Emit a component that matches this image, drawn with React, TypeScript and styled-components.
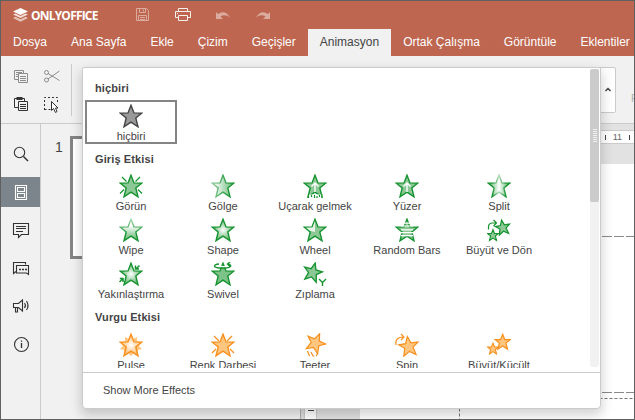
import React, { ReactNode } from "react";
import styled, { createGlobalStyle } from "styled-components";

const Global = createGlobalStyle`
  * { box-sizing: border-box; }
  body { margin: 0; background: #fff; font-family: "Liberation Sans", Arial, sans-serif; }
  svg { display: block; flex: none; }
`;

const Frame = styled.div`
  position: relative;
  width: 635px;
  height: 420px;
  overflow: hidden;
  border: 1px solid #606060;
  background: #f1f1f1;
  display: flex;
  flex-direction: column;
  color: #444;
  font-size: 11px;
`;

const Header = styled.header`
  flex: none;
  height: 55px;
  background: #be664f;
  color: #fff;
`;

const TitleBar = styled.div`
  height: 28px;
  display: flex;
  align-items: center;
  padding-left: 11px;
`;

const Brand = styled.span`
  width: 100px;
  margin-left: 1px;
  font: 700 12px "Open Sans", sans-serif;
  letter-spacing: -0.8px;
`;

const QuickAction = styled.span<{ $dim?: boolean; $width: number }>`
  width: ${(p) => p.$width}px;
  opacity: ${(p) => (p.$dim ? 0.45 : 0.9)};
`;

const TabBar = styled.nav`
  display: flex;
  height: 27px;
`;

const Tab = styled.div<{ $active?: boolean }>`
  padding: 0 12px;
  line-height: 26px;
  font-size: 12px;
  white-space: nowrap;
  color: ${(p) => (p.$active ? "#444" : "#fff")};
  background: ${(p) => (p.$active ? "#f1f1f1" : "transparent")};
`;

const Toolbar = styled.div`
  flex: none;
  height: 68px;
  display: flex;
  border-bottom: 1px solid #cbcbcb;
  background: #f1f1f1;
`;

const ToolGrid = styled.div`
  display: grid;
  grid-template-columns: 20px 20px;
  grid-template-rows: 20px 20px;
  gap: 8px 10px;
  padding: 10px 0 0 10px;
`;

const ToolSeparator = styled.div`
  width: 1px;
  height: 52px;
  margin: 8px 0 0 10px;
  background: #cbcbcb;
`;

const GalleryArrow = styled.div`
  width: 16px;
  height: 46px;
  margin: 11px 15px 0 auto;
  border: 1px solid #cbcbcb;
  border-radius: 0 2px 2px 0;
  background: #fff;
  display: flex;
  align-items: center;
  justify-content: center;
`;

const CutLabel = styled.div`
  width: 3px;
  padding-top: 36px;
  overflow: hidden;
  color: #b2b2b2;
`;

const Workspace = styled.div`
  flex: 1;
  min-height: 0;
  display: flex;
`;

const Rail = styled.aside`
  width: 40px;
  flex: none;
  border-right: 1px solid #cbcbcb;
  padding-top: 15px;
  display: flex;
  flex-direction: column;
  gap: 8px;
`;

const RailButton = styled.div<{ $active?: boolean }>`
  height: 30px;
  background: ${(p) => (p.$active ? "#7d858c" : "transparent")};
  color: ${(p) => (p.$active ? "#fff" : "#333")};
`;

const Slides = styled.div`
  width: 259px;
  flex: none;
  display: flex;
  padding: 12px 0 0 14px;
`;

const SlideNumber = styled.span`
  width: 15px;
  padding-top: 3px;
  font-size: 14px;
  line-height: 16px;
`;

const Thumbnail = styled.div`
  width: 200px;
  height: 123px;
  border: 3px solid #848484;
  background: #fff;
`;

const Splitter = styled.div`
  width: 4px;
  flex: none;
  border-left: 1px solid #b0b0b0;
  background: #dcdcdc;
`;

const VerticalRuler = styled.div`
  width: 13px;
  flex: none;
  border: solid #cbcbcb;
  border-width: 0 1px;
  background: #fff;
  display: flex;
  justify-content: center;
  align-items: flex-end;
  padding-bottom: 8px;
`;

const RulerDash = styled.i`
  width: 6px;
  height: 1px;
  background: #444;
`;

const Canvas = styled.main`
  flex: 1;
  background: #e2e2e2;
  display: flex;
  flex-direction: column;
`;

const Ruler = styled.div`
  margin-top: 6px;
  height: 14px;
  flex: none;
  border: solid #cbcbcb;
  border-width: 1px 0;
  background: #fff;
  display: flex;
  align-items: center;
  justify-content: flex-end;
  gap: 7px;
  padding-right: 4px;
  font-size: 9px;
  color: #666;
`;

const RulerTick = styled.i`
  width: 1px;
  height: 5px;
  background: #444;
`;

const Page = styled.div`
  flex: 1;
  margin: 20px 0 0 43px;
  background: #fff;
`;

const Popup = styled.section`
  position: absolute;
  left: 81px;
  top: 66px;
  width: 519px;
  height: 342px;
  border: 1px solid #cbcbcb;
  border-radius: 2px 2px 4px 4px;
  background: #fff;
  box-shadow: 0 5px 12px 1px rgba(0, 0, 0, 0.18);
  display: flex;
  flex-direction: column;
`;

const ScrollArea = styled.div`
  height: 300px;
  flex: none;
  display: flex;
  justify-content: space-between;
  overflow: hidden;
`;

const Groups = styled.div`
  padding-left: 2px;
  width: 464px;
`;

const GroupTitle = styled.h3<{ $height: number; $bottom?: number }>`
  margin: 0;
  padding: 0 0 ${(p) => p.$bottom ?? 4}px 10px;
  height: ${(p) => p.$height}px;
  display: flex;
  align-items: flex-end;
  font-size: 11px;
  line-height: 16px;
  font-weight: 700;
  letter-spacing: 0.12px;
`;

const Items = styled.div`
  display: grid;
  grid-template-columns: repeat(5, 92px);
  grid-auto-rows: 44px;
`;

const Item = styled.div<{ $selected?: boolean }>`
  border: 2px solid ${(p) => (p.$selected ? "#848484" : "transparent")};
  padding-top: 2px;
  display: flex;
  flex-direction: column;
  align-items: center;
  white-space: nowrap;
  line-height: 16px;
`;

const ScrollTrack = styled.div`
  width: 9px;
  height: 298px;
  margin: 1px 1px 0 0;
  border-radius: 3px;
  background: #f1f1f1;
`;

const ScrollThumb = styled.div`
  height: 133px;
  border-radius: 2px;
  background: #cbcbcb;
  display: flex;
  flex-direction: column;
  align-items: center;
  justify-content: center;
  gap: 1px;
  padding-bottom: 1px;
`;

const Grip = styled.i`
  width: 4px;
  height: 1px;
  background: #f1f1f1;
`;

const Footer = styled.div`
  flex: 1;
  margin-top: 4px;
  border-top: 1px solid #cbcbcb;
  padding-left: 20px;
  line-height: 35px;
`;

const STAR = "M12 1.200 15 8.900 22.900 9.100 16.800 14 19 22.800 12 18.200 5 22.800 7.200 14 1.100 9.100 9 8.900Z";
const GREEN = "#15932f";
const ORANGE = "#f7901e";

type StarProps = { fill?: string; stroke?: string; at?: string; width?: number };
const Star = ({ fill = "#8cc896", stroke = GREEN, at, width = 1.4 }: StarProps) => (
  <path d={STAR} fill={fill} stroke={stroke} strokeWidth={width} transform={at} />
);
const OrangeStar = (p: StarProps) => <Star fill="#ffc680" stroke={ORANGE} {...p} />;

const Glyph = ({ children }: { children: ReactNode }) => (
  <svg width="24" height="24" viewBox="0 0 24 24" fill="none">{children}</svg>
);

const Line = ({ d, color = GREEN, w = 1.2 }: { d: string; color?: string; w?: number }) => (
  <path d={d} fill="none" stroke={color} strokeWidth={w} />
);

const Gradients = () => (
  <svg width="0" height="0">
    <defs>
      <linearGradient id="fade"><stop offset=".1" stopColor="#fff" /><stop offset="1" stopColor="#62b672" /></linearGradient>
      <linearGradient id="wipeFill" x2="0" y2="1"><stop offset=".3" stopColor="#fff" /><stop offset=".9" stopColor="#70bd7e" /></linearGradient>
      <linearGradient id="wipeLine" x2="0" y2="1"><stop stopColor="#a9d8b2" /><stop offset=".7" stopColor={GREEN} /></linearGradient>
      <linearGradient id="fadeLine"><stop stopColor="#8bcb98" /><stop offset=".8" stopColor={GREEN} /></linearGradient>
      <linearGradient id="splitFill"><stop offset=".1" stopColor="#70bd7e" /><stop offset=".5" stopColor="#fff" /><stop offset=".9" stopColor="#70bd7e" /></linearGradient>
      <linearGradient id="splitLine"><stop offset=".2" stopColor={GREEN} /><stop offset=".5" stopColor="#b5dcbc" /><stop offset=".8" stopColor={GREEN} /></linearGradient>
      <radialGradient id="core"><stop stopColor="#fff" /><stop offset=".8" stopColor="#7cc289" /></radialGradient>
      <radialGradient id="pulse"><stop stopColor="#fff" /><stop offset=".8" stopColor="#ffc680" /></radialGradient>
    </defs>
  </svg>
);

type Effect = { label: string; art: ReactNode; selected?: boolean };
type Group = { title: string; titleHeight: number; titleBottom?: number; effects: Effect[] };

const UpArrow = () => <Line d="M12 18V9M8.500 12.500 12 9l3.500 3.500" color="#fff" w={1.4} />;

const groups: Group[] = [
  {
    title: "hiçbiri",
    titleHeight: 32,
    effects: [{ label: "hiçbiri", selected: true, art: <Star fill="#999" stroke="#444" /> }],
  },
  {
    title: "Giriş Etkisi",
    titleHeight: 26,
    titleBottom: 3,
    effects: [
      { label: "Görün", art: <><Line d="M3 3l4.500 4.500M21 3l-4.500 4.500M1 19.500l4-4M23 19.500l-4-4" /><Star /></> },
      { label: "Gölge", art: <Star fill="url(#fade)" stroke="url(#fadeLine)" /> },
      { label: "Uçarak gelmek", art: <><Star /><path d="M5 20.500h14V24H5z" fill="#fff" /><UpArrow /><Line d="M5.500 20v4M8.500 21v2M11.500 21v3M14 22v2M16.500 21v2M18.800 20v4" /></> },
      { label: "Yüzer", art: <><Star /><UpArrow /></> },
      { label: "Split", art: <Star fill="url(#splitFill)" stroke="url(#splitLine)" /> },
      { label: "Wipe", art: <Star fill="url(#wipeFill)" stroke="url(#wipeLine)" /> },
      { label: "Shape", art: <Star fill="url(#core)" /> },
      { label: "Wheel", art: <><Star /><path d="M12 3v11L7.500 13 3 9.800l6.500-.2z" fill="#fff" opacity=".8" /></> },
      { label: "Random Bars", art: <><Star /><path d="M6 4.500h12v1.300H6zM6 7.400h12v1.200H6zM6 11.200h12v1.200H6zM5 14h14v1.200H5zM6 17h12v1.200H6z" fill="#fff" /></> },
      { label: "Büyüt ve Dön", art: <><Star at="translate(8.500 .500) rotate(-10 12 12) scale(.66)" width={1.9} /><Star at="translate(0 11) scale(.5)" width={2.2} /><Line d="M1.500 11.500V9q0-4 4-4h3.500M6.500 2l3 3-3 3" /></> },
      { label: "Yakınlaştırma", art: <><Star fill="url(#core)" /><Line d="M20.500 3.500 17 7M16.500 3.500v3.500h3.500M.500 20 4 16.500M.800 16.500h3.200v3.500" w={1.5} /></> },
      { label: "Swivel", art: <><Star fill="#7cc289" /><path d="M8 5.500h8v-1.500H8z" fill="#fff" /><Line d="M8 2C2 2.500 2 5.500 8 6h6c7-.5 7-3 3-4M19 0l-2.500 2L19 4.500" w={1.4} /></> },
      { label: "Zıplama", art: <><Star at="translate(-.500 0) rotate(15 11 11) scale(.84)" width={1.6} /><Line d="M16 17l3.500 3.500L23 17M19.500 20v4" w={1.4} /></> },
    ],
  },
  {
    title: "Vurgu Etkisi",
    titleHeight: 27,
    effects: [
      { label: "Pulse", art: <><path d="M12 3l2 3 4-2v4l4 1-2 4 3 3-4 1v4l-4-1-3 3-3-3-4 1v-4l-4-1 3-3-2-4 4-1V4l4 2z" fill="#ffc680" /><OrangeStar fill="url(#pulse)" /></> },
      { label: "Renk Darbesi", art: <><Line d="M3 3l5 5M21 3l-5 5M1 20l4-4M23 20l-4-4" color={ORANGE} /><OrangeStar /></> },
      { label: "Teeter", art: <><OrangeStar at="translate(2 -1) rotate(24 11 11) scale(.88)" /><Line d="M4.500 18l2 5M8 19l2 4M13 23l2-3M9.500 23h2" color={ORANGE} /></> },
      { label: "Spin", art: <><OrangeStar at="translate(3 2.500) rotate(-8 10 10) scale(.88)" /><Line d="M1 12Q0 4 8 4M6 1l3 3-3 3" color={ORANGE} /></> },
      { label: "Büyüt/Küçült", art: <><OrangeStar at="translate(7.500 .500) scale(.68)" width={1.8} /><OrangeStar at="translate(0 9.500) scale(.5)" width={2.2} /></> },
    ],
  },
];

const tabs = ["Dosya", "Ana Sayfa", "Ekle", "Çizim", "Geçişler", "Animasyon", "Ortak Çalışma", "Görüntüle", "Eklentiler"];

const RailGlyph = ({ children }: { children: ReactNode }) => (
  <svg width="39" height="30" fill="none" stroke="currentColor" strokeWidth="1.1">{children}</svg>
);

const railGlyphs: ReactNode[] = [
  <><circle cx="18.500" cy="13.500" r="5.200" /><path d="M22.500 17.500 27 22" strokeWidth="1.500" /></>,
  <path d="M14.500 8.500h11v14h-11zM16.500 10.500h7v4h-7zM16.500 16.500h7v4h-7z" />,
  <path d="M12.500 8.500h15v11h-7l-3 3v-3h-5zM15 11.500h10M15 13.500h10M15 16.500h7" />,
  <><path d="M15 18.500l-2.500 2v-11h12v2M15.500 12.500h12v9l-2-1.500h-10z" /><path d="M18 16.500h2M21 16.500h2M24 16.500h2" strokeWidth="1.500" /></>,
  <path d="M12.500 12.500h5l4-3.500v11l-4-3.500h-5zM14.500 17v4h2v-4M23.500 12q2 2.500 0 5M25.500 10q3 4.500 0 9" />,
  <><circle cx="20.500" cy="15.500" r="7" /><path d="M20.500 14v5M20.500 11.500v1.300" strokeWidth="1.300" /></>,
];

const ToolGlyph = ({ children, color = "#333" }: { children: ReactNode; color?: string }) => (
  <svg width="20" height="20" fill="none" stroke={color}>{children}</svg>
);

const Guides = styled.svg`
  position: absolute;
  left: 0;
  top: 0;
  pointer-events: none;
`;

export default function App() {
  return (
    <Frame>
      <Global />
      <Gradients />
      <Header>
        <TitleBar>
          <svg width="18" height="18" viewBox="0 0 18 18" fill="#fff">
            <path d="M1 5.500 8.500 2 16 5.500 8.500 9z" />
            <path d="M1 8.500l2.500-1L8.500 10l5-2.500 2.500 1-7.500 3.500z" opacity=".8" />
            <path d="M1 12l2.500-1.200 5 2.500 5-2.500L16 12l-7.500 3.700z" opacity=".6" />
          </svg>
          <Brand>ONLYOFFICE</Brand>
          <QuickAction $dim $width={39}>
            <svg width="24" height="16" fill="none" stroke="#fff"><path d="M5.500 1.500h10l2 2v10h-12zM8.500 1.500v4h6v-4M12.500 2.500v2M7.500 13.500v-5h8v5M9 10.500h5M9 12.500h5" /></svg>
          </QuickAction>
          <QuickAction $width={41}>
            <svg width="24" height="16" fill="none" stroke="#fff"><path d="M8.500 4.500v-3h9v3M8.500 10.500h-3v-6h15v6h-3M8.500 8.500h9v5h-9zM7 6.500h1" /></svg>
          </QuickAction>
          <QuickAction $dim $width={40}>
            <svg width="24" height="16" fill="#fff"><path d="M5 5l2 2Q14 2 19 10.500 14 6.500 9.500 9.500L12 12H5z" /></svg>
          </QuickAction>
          <QuickAction $dim $width={40}>
            <svg width="24" height="16" fill="#fff"><path d="M19 5l-2 2Q10 2 5 10.500 10 6.500 14.500 9.500L12 12h7z" /></svg>
          </QuickAction>
        </TitleBar>
        <TabBar>
          {tabs.map((name) => (
            <Tab key={name} $active={name === "Animasyon"}>{name}</Tab>
          ))}
        </TabBar>
      </Header>
      <Toolbar>
        <ToolGrid>
          <ToolGlyph color="#8c8c8c"><path d="M7 13.500H3.500v-9h9V7M5 6.500h6M5 8.500h2M5 10.500h2M7.500 7.500h9v9h-9zM9 10.500h6M9 12.500h6M9 14.500h6" /></ToolGlyph>
          <ToolGlyph color="#8c8c8c"><circle cx="5.500" cy="6.500" r="2" /><circle cx="5.500" cy="14" r="2" /><path d="M7 7.500 18.500 14.500M7 13 18.500 5" /></ToolGlyph>
          <ToolGlyph><path d="M7 13.500H3.500v-9h10V7M7.500 7.500h9v9h-9zM9 10.500h6M9 12.500h6M9 14.500h6" /><path d="M5.500 4.500h6" strokeWidth="3" /></ToolGlyph>
          <ToolGlyph><path d="M3.500 16V3.500h13V9M3.500 15.500H10" strokeDasharray="2 2" /><path d="M10.500 7.500v9l2-2 2 4 1.500-1-1.500-3.500h2.500z" fill="#fff" /></ToolGlyph>
        </ToolGrid>
        <ToolSeparator />
        <GalleryArrow>
          <svg width="8" height="6" fill="none" stroke="#444" strokeWidth="1.500"><path d="M1.500 4 4 1.500 6.500 4" /></svg>
        </GalleryArrow>
        <CutLabel>P</CutLabel>
      </Toolbar>
      <Workspace>
        <Rail>
          {railGlyphs.map((glyph, i) => (
            <RailButton key={i} $active={i === 1}><RailGlyph>{glyph}</RailGlyph></RailButton>
          ))}
        </Rail>
        <Slides>
          <SlideNumber>1</SlideNumber>
          <Thumbnail />
        </Slides>
        <Splitter />
        <VerticalRuler><RulerDash /></VerticalRuler>
        <Canvas>
          <Ruler><RulerTick /><span>11</span><RulerTick /></Ruler>
          <Page />
        </Canvas>
      </Workspace>
      <Guides width="633" height="418" fill="none" stroke="#777">
        <path d="M601 235.500h32M601 391.500h32" stroke="#8a8a8a" strokeDasharray="10 2" />
        <path d="M458.500 397.500H633M458.500 397.500V418" strokeDasharray="3 2" />
      </Guides>
      <Popup>
        <ScrollArea>
          <Groups>
            {groups.map((g) => (
              <React.Fragment key={g.title}>
                <GroupTitle $height={g.titleHeight} $bottom={g.titleBottom}>{g.title}</GroupTitle>
                <Items>
                  {g.effects.map((e) => (
                    <Item key={e.label} $selected={e.selected}>
                      <Glyph>{e.art}</Glyph>
                      {e.label}
                    </Item>
                  ))}
                </Items>
              </React.Fragment>
            ))}
          </Groups>
          <ScrollTrack>
            <ScrollThumb>
              {Array.from({ length: 7 }, (_, i) => <Grip key={i} />)}
            </ScrollThumb>
          </ScrollTrack>
        </ScrollArea>
        <Footer>Show More Effects</Footer>
      </Popup>
    </Frame>
  );
}
